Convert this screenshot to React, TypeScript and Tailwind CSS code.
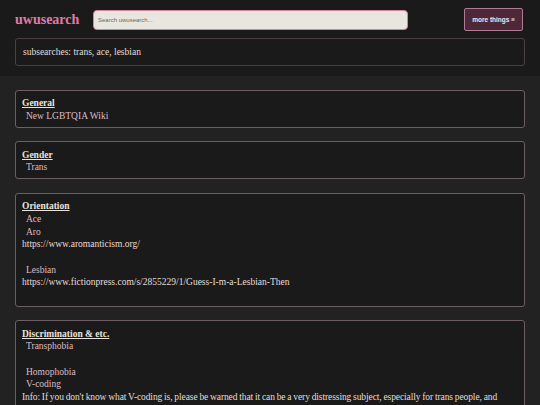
import React from 'react';

type Line = { text: string; kind: 'item' | 'url' | 'info' | 'blank' };

interface Section {
  title: string;
  lines: Line[];
}

const sections: Section[] = [
  { title: 'General', lines: [{ text: 'New LGBTQIA Wiki', kind: 'item' }] },
  { title: 'Gender', lines: [{ text: 'Trans', kind: 'item' }] },
  {
    title: 'Orientation',
    lines: [
      { text: 'Ace', kind: 'item' },
      { text: 'Aro', kind: 'item' },
      { text: 'https://www.aromanticism.org/', kind: 'url' },
      { text: '', kind: 'blank' },
      { text: 'Lesbian', kind: 'item' },
      { text: 'https://www.fictionpress.com/s/2855229/1/Guess-I-m-a-Lesbian-Then', kind: 'url' },
      { text: '', kind: 'blank' },
    ],
  },
  {
    title: 'Discrimination & etc.',
    lines: [
      { text: 'Transphobia', kind: 'item' },
      { text: '', kind: 'blank' },
      { text: 'Homophobia', kind: 'item' },
      { text: 'V-coding', kind: 'item' },
      {
        text: "Info: If you don't know what V-coding is, please be warned that it can be a very distressing subject, especially for trans people, and nonbinary people in general.",
        kind: 'info',
      },
    ],
  },
];

const SectionCard: React.FC<{ section: Section }> = ({ section }) => (
  <div className="rounded-[3px] border border-[#6e5d65] bg-[#1b1a1a] px-[6px] pt-[6.3px] pb-[4.3px] text-[9.5px] leading-[12.67px]">
    <div className="font-bold text-[#e9e3de] underline underline-offset-[1px]">{section.title}</div>
    {section.lines.map((line, i) => {
      if (line.kind === 'blank') return <div key={i} className="h-[12.67px]" />;
      if (line.kind === 'item')
        return (
          <div key={i} className="pl-[4px] text-[#dcbcc6]">
            {line.text}
          </div>
        );
      if (line.kind === 'info')
        return (
          <div key={i} className="tracking-[-0.1px] [word-spacing:-0.4px] text-[#e4ddd8]">
            {line.text}
          </div>
        );
      return (
        <div key={i} className="text-[#e4ddd8]">
          {line.text}
        </div>
      );
    })}
  </div>
);

export default function App() {
  return (
    <div className="min-h-screen bg-[#222222] font-['Liberation_Serif',serif]">
      {/* top bar */}
      <header className="bg-[#1b1a1a] px-[15px] pt-[8px] pb-[10px]">
        <div className="flex h-[23px] items-center">
          <div className="w-[78px] text-[14px] font-bold text-[#e07aa5]">uwusearch</div>
          <input
            readOnly
            placeholder="Search uwusearch..."
            className="h-[20px] w-[315px] rounded-[4px] border-[1.5px] border-[#d684a6] bg-[#e9e6df] px-[4px] font-['Liberation_Sans',sans-serif] text-[6px] text-[#555] placeholder:text-[#6b6b6b] outline-none"
          />
          <div className="ml-auto mr-[2px] flex h-[23px] items-center rounded-[2px] border border-[#b07a93] bg-[#4d2838] px-[7px] font-['Liberation_Sans',sans-serif] text-[6.5px] font-bold text-[#f1e6ea]">
            more things ≡
          </div>
        </div>
        <div className="mt-[7px] flex h-[28px] items-center rounded-[3px] border border-[#4d3f45] px-[7px] pt-[1px] text-[9.5px] text-[#e6ddd7]">
          subsearches: trans, ace, lesbian
        </div>
      </header>

      <main className="flex flex-col gap-[13.5px] px-[15px] pt-[14px]">
        {sections.map((s) => (
          <SectionCard key={s.title} section={s} />
        ))}
      </main>
    </div>
  );
}
